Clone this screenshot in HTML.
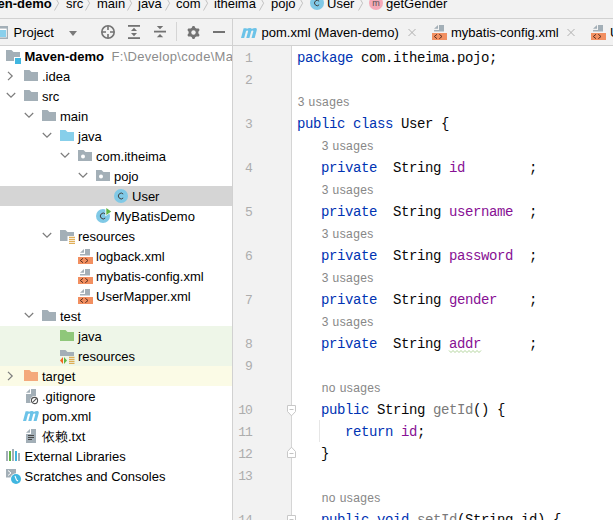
<!DOCTYPE html><html><head><meta charset="utf-8"><style>
*{margin:0;padding:0;box-sizing:border-box}
html,body{width:613px;height:520px;overflow:hidden;background:#fff;font-family:"Liberation Sans",sans-serif;position:relative}
.a{position:absolute}
.tx{position:absolute;white-space:nowrap;font-size:13px;color:#000;line-height:16px}
.mono{position:absolute;font-family:"Liberation Mono",monospace;font-size:14px;letter-spacing:-0.4px;white-space:pre;line-height:16px;color:#080808}
.k{color:#0033b3}.f{color:#871094}.g{color:#7a7a7a}
.hint{position:absolute;font-size:12px;letter-spacing:0.4px;color:#878787;white-space:nowrap;line-height:16px}
svg{position:absolute;overflow:visible}
</style></head><body>
<div class="a" style="left:0px;top:0px;width:613px;height:18px;background:#f2f2f2"></div>
<div class="a" style="left:0px;top:18px;width:613px;height:1px;background:#d1d1d1"></div>
<div class="tx" style="left:-2.5px;top:-4.00px;font-size:13px;color:#000;font-weight:bold;">en-demo</div>
<svg style="left:54px;top:0px" width="6" height="13" viewBox="0 0 6 13"><path d="M0.5 -4 L4.6 3.2 L0.5 10.5" fill="none" stroke="#c2c2c2" stroke-width="1"/></svg>
<div class="tx" style="left:66px;top:-4.00px;font-size:13px;color:#000;font-weight:normal;">src</div>
<svg style="left:85px;top:0px" width="6" height="13" viewBox="0 0 6 13"><path d="M0.5 -4 L4.6 3.2 L0.5 10.5" fill="none" stroke="#c2c2c2" stroke-width="1"/></svg>
<div class="tx" style="left:97px;top:-4.00px;font-size:13px;color:#000;font-weight:normal;">main</div>
<svg style="left:127px;top:0px" width="6" height="13" viewBox="0 0 6 13"><path d="M0.5 -4 L4.6 3.2 L0.5 10.5" fill="none" stroke="#c2c2c2" stroke-width="1"/></svg>
<div class="tx" style="left:138px;top:-4.00px;font-size:13px;color:#000;font-weight:normal;">java</div>
<svg style="left:165px;top:0px" width="6" height="13" viewBox="0 0 6 13"><path d="M0.5 -4 L4.6 3.2 L0.5 10.5" fill="none" stroke="#c2c2c2" stroke-width="1"/></svg>
<div class="tx" style="left:176px;top:-4.00px;font-size:13px;color:#000;font-weight:normal;">com</div>
<svg style="left:203px;top:0px" width="6" height="13" viewBox="0 0 6 13"><path d="M0.5 -4 L4.6 3.2 L0.5 10.5" fill="none" stroke="#c2c2c2" stroke-width="1"/></svg>
<div class="tx" style="left:214px;top:-4.00px;font-size:13px;color:#000;font-weight:normal;">itheima</div>
<svg style="left:259px;top:0px" width="6" height="13" viewBox="0 0 6 13"><path d="M0.5 -4 L4.6 3.2 L0.5 10.5" fill="none" stroke="#c2c2c2" stroke-width="1"/></svg>
<div class="tx" style="left:271px;top:-4.00px;font-size:13px;color:#000;font-weight:normal;">pojo</div>
<svg style="left:298px;top:0px" width="6" height="13" viewBox="0 0 6 13"><path d="M0.5 -4 L4.6 3.2 L0.5 10.5" fill="none" stroke="#c2c2c2" stroke-width="1"/></svg>
<svg style="left:310px;top:-4px" width="14" height="14" viewBox="0 0 14 14"><circle cx="7" cy="7" r="7" fill="#80c9e6"/><path d="M9.1 5.2 A2.6 2.7 0 1 0 9.1 8.8" fill="none" stroke="#404040" stroke-width="1"/></svg>
<div class="tx" style="left:327px;top:-4.00px;font-size:13px;color:#000;font-weight:normal;">User</div>
<svg style="left:358px;top:0px" width="6" height="13" viewBox="0 0 6 13"><path d="M0.5 -4 L4.6 3.2 L0.5 10.5" fill="none" stroke="#c2c2c2" stroke-width="1"/></svg>
<svg style="left:369px;top:-4px" width="14" height="14" viewBox="0 0 14 14"><circle cx="7" cy="7" r="7" fill="#f5a9b8"/><text x="7" y="9.5" font-size="9" text-anchor="middle" fill="#505050" font-family="Liberation Sans">m</text></svg>
<div class="tx" style="left:386px;top:-4.00px;font-size:13px;color:#000;font-weight:normal;">getGender</div>
<div class="a" style="left:0px;top:19px;width:232px;height:26px;background:#f2f2f2"></div>
<div class="a" style="left:0px;top:45px;width:613px;height:1px;background:#d1d1d1"></div>
<svg style="left:-6px;top:26px" width="14" height="13" viewBox="0 0 14 13"><rect x="0" y="0" width="14" height="13" fill="#a3afb7"/><rect x="0" y="2.6" width="12.7" height="8.8" fill="#fff"/><rect x="0" y="4" width="12" height="7" fill="#8ad0ec"/></svg>
<div class="tx" style="left:13.5px;top:24.80px;font-size:13px;color:#000;font-weight:normal;">Project</div>
<svg style="left:69px;top:31px" width="8" height="5" viewBox="0 0 8 5"><path d="M0 0 H8 L4 5 Z" fill="#7a7a7a"/></svg>
<svg style="left:101px;top:25px" width="14" height="14" viewBox="0 0 14 14"><circle cx="7" cy="7" r="6.2" fill="none" stroke="#737373" stroke-width="1.6"/><path d="M7 1 V5 M7 9 V13 M1 7 H5 M9 7 H13" stroke="#737373" stroke-width="1.6"/></svg>
<svg style="left:128px;top:25px" width="12" height="14" viewBox="0 0 12 14"><rect x="0" y="0" width="12" height="1.8" fill="#737373"/><rect x="0" y="12.2" width="12" height="1.8" fill="#737373"/><path d="M3 6 L6 2.8 L9 6 Z M3 8 L6 11.2 L9 8 Z" fill="#737373"/></svg>
<svg style="left:154px;top:25px" width="12" height="13" viewBox="0 0 12 13"><rect x="0" y="5.7" width="12" height="1.8" fill="#737373"/><path d="M2.8 1 H9.2 L6 4.2 Z M2.8 12.3 H9.2 L6 9.1 Z" fill="#737373"/></svg>
<div class="a" style="left:176px;top:22px;width:1px;height:19px;background:#d5d5d5"></div>
<svg style="left:186.5px;top:25.5px" width="13" height="13" viewBox="0 0 13 13"><polygon points="5.64,-0.04 7.36,-0.04 8.38,1.97 9.48,2.61 11.74,2.48 12.60,3.97 11.36,5.86 11.36,7.14 12.60,9.03 11.74,10.52 9.48,10.39 8.38,11.03 7.36,13.04 5.64,13.04 4.62,11.03 3.52,10.39 1.26,10.52 0.40,9.03 1.64,7.14 1.64,5.86 0.40,3.97 1.26,2.48 3.52,2.61 4.62,1.97" fill="#737373"/><circle cx="6.5" cy="6.5" r="2.2" fill="#f2f2f2"/></svg>
<div class="a" style="left:213px;top:31px;width:12px;height:2px;background:#737373"></div>
<div class="a" style="left:0px;top:46px;width:232px;height:474px;background:#fff"></div>
<div class="a" style="left:0px;top:186px;width:232px;height:20px;background:#d5d5d5"></div>
<div class="a" style="left:0px;top:326px;width:232px;height:40px;background:#eef6e8"></div>
<div class="a" style="left:0px;top:366px;width:232px;height:20px;background:#fbfbe6"></div>
<svg style="left:6px;top:50px" width="16" height="14" viewBox="0 0 16 14"><path d="M0 0 H5.5 L7.5 2 H14 V11 H0 Z" fill="#a3afb7"/><rect x="8" y="7" width="8" height="7" fill="#fff"/><rect x="9" y="8" width="6" height="6" fill="#40b6e0"/></svg>
<div class="tx" style="left:24.5px;top:48.50px;font-size:13px;color:#000;font-weight:normal;"><b>Maven-demo</b></div>
<svg style="left:7px;top:70.5px" width="7" height="10" viewBox="0 0 7 10"><path d="M1 0.8 L5.2 5 L1 9.2" fill="none" stroke="#7c7c7c" stroke-width="1.2"/></svg>
<svg style="left:24px;top:70px" width="14" height="11" viewBox="0 0 14 11"><path d="M0 0 H5.5 L7.5 2 H14 V11 H0 Z" fill="#a3afb7"/></svg>
<div class="tx" style="left:42px;top:68.50px;font-size:13px;color:#000;font-weight:normal;">.idea</div>
<svg style="left:6px;top:92.2px" width="10" height="7" viewBox="0 0 10 7"><path d="M0.8 1 L5 5.2 L9.2 1" fill="none" stroke="#7c7c7c" stroke-width="1.2"/></svg>
<svg style="left:24px;top:90px" width="14" height="11" viewBox="0 0 14 11"><path d="M0 0 H5.5 L7.5 2 H14 V11 H0 Z" fill="#a3afb7"/></svg>
<div class="tx" style="left:42px;top:88.50px;font-size:13px;color:#000;font-weight:normal;">src</div>
<svg style="left:24px;top:112.2px" width="10" height="7" viewBox="0 0 10 7"><path d="M0.8 1 L5 5.2 L9.2 1" fill="none" stroke="#7c7c7c" stroke-width="1.2"/></svg>
<svg style="left:42px;top:110px" width="14" height="11" viewBox="0 0 14 11"><path d="M0 0 H5.5 L7.5 2 H14 V11 H0 Z" fill="#a3afb7"/></svg>
<div class="tx" style="left:60px;top:108.50px;font-size:13px;color:#000;font-weight:normal;">main</div>
<svg style="left:42px;top:132.2px" width="10" height="7" viewBox="0 0 10 7"><path d="M0.8 1 L5 5.2 L9.2 1" fill="none" stroke="#7c7c7c" stroke-width="1.2"/></svg>
<svg style="left:60px;top:130px" width="14" height="11" viewBox="0 0 14 11"><path d="M0 0 H5.5 L7.5 2 H14 V11 H0 Z" fill="#87cfea"/></svg>
<div class="tx" style="left:78px;top:128.50px;font-size:13px;color:#000;font-weight:normal;">java</div>
<svg style="left:60px;top:152.2px" width="10" height="7" viewBox="0 0 10 7"><path d="M0.8 1 L5 5.2 L9.2 1" fill="none" stroke="#7c7c7c" stroke-width="1.2"/></svg>
<svg style="left:78px;top:150px" width="14" height="11" viewBox="0 0 14 11"><path d="M0 0 H5.5 L7.5 2 H14 V11 H0 Z" fill="#a3afb7"/><circle cx="5" cy="6.5" r="2" fill="#fff"/></svg>
<div class="tx" style="left:96px;top:148.50px;font-size:13px;color:#000;font-weight:normal;">com.itheima</div>
<svg style="left:78px;top:172.2px" width="10" height="7" viewBox="0 0 10 7"><path d="M0.8 1 L5 5.2 L9.2 1" fill="none" stroke="#7c7c7c" stroke-width="1.2"/></svg>
<svg style="left:96px;top:170px" width="14" height="11" viewBox="0 0 14 11"><path d="M0 0 H5.5 L7.5 2 H14 V11 H0 Z" fill="#a3afb7"/><circle cx="5" cy="6.5" r="2" fill="#fff"/></svg>
<div class="tx" style="left:114px;top:168.50px;font-size:13px;color:#000;font-weight:normal;">pojo</div>
<svg style="left:114px;top:189px" width="14" height="14" viewBox="0 0 14 14"><circle cx="7" cy="7" r="7" fill="#80c9e6"/><path d="M9.2 5.0 A2.8 2.9 0 1 0 9.2 9.0" fill="none" stroke="#404040" stroke-width="1"/></svg>
<div class="tx" style="left:132px;top:188.50px;font-size:13px;color:#000;font-weight:normal;">User</div>
<svg style="left:96px;top:209px" width="15" height="14" viewBox="0 0 15 14"><circle cx="7" cy="7" r="7" fill="#80c9e6"/><path d="M9.2 5.0 A2.8 2.9 0 1 0 9.2 9.0" fill="none" stroke="#404040" stroke-width="1"/><path d="M9.4 -2.4 L16.4 2.4 L9.4 7.2 Z" fill="#fff"/><path d="M10.3 -1.1 L15.2 2.4 L10.3 5.9 Z" fill="#5fb544"/></svg>
<div class="tx" style="left:114px;top:208.50px;font-size:13px;color:#000;font-weight:normal;">MyBatisDemo</div>
<svg style="left:42px;top:232.2px" width="10" height="7" viewBox="0 0 10 7"><path d="M0.8 1 L5 5.2 L9.2 1" fill="none" stroke="#7c7c7c" stroke-width="1.2"/></svg>
<svg style="left:60px;top:230px" width="15" height="14" viewBox="0 0 15 14"><path d="M0 0 H5.5 L7.5 2 H14 V11 H0 Z" fill="#a3afb7"/><rect x="7.5" y="6" width="7.5" height="8" fill="#fff"/><path d="M9 7.3 H15 M9 9.3 H15 M9 11.3 H15 M9 13.3 H15" stroke="#d99c30" stroke-width="1"/></svg>
<div class="tx" style="left:78px;top:228.50px;font-size:13px;color:#000;font-weight:normal;">resources</div>
<svg style="left:78px;top:249px" width="15" height="15" viewBox="0 0 15 15"><path d="M7 0 H12 V6.6 H2 V5 H7 Z" fill="#a3afb7"/><path d="M2 3.7 L6 0 V3.7 Z" fill="#a3afb7"/><rect x="0" y="8" width="15" height="7" fill="#f28f60"/><path d="M5 9.3 L2.3 11.5 L5 13.7 M7.3 9.3 L10 11.5 L7.3 13.7" fill="none" stroke="#5a3020" stroke-width="1"/></svg>
<div class="tx" style="left:96px;top:248.50px;font-size:13px;color:#000;font-weight:normal;">logback.xml</div>
<svg style="left:78px;top:269px" width="15" height="15" viewBox="0 0 15 15"><path d="M7 0 H12 V6.6 H2 V5 H7 Z" fill="#a3afb7"/><path d="M2 3.7 L6 0 V3.7 Z" fill="#a3afb7"/><rect x="0" y="8" width="15" height="7" fill="#f28f60"/><path d="M5 9.3 L2.3 11.5 L5 13.7 M7.3 9.3 L10 11.5 L7.3 13.7" fill="none" stroke="#5a3020" stroke-width="1"/></svg>
<div class="tx" style="left:96px;top:268.50px;font-size:13px;color:#000;font-weight:normal;">mybatis-config.xml</div>
<svg style="left:78px;top:289px" width="15" height="15" viewBox="0 0 15 15"><path d="M7 0 H12 V6.6 H2 V5 H7 Z" fill="#a3afb7"/><path d="M2 3.7 L6 0 V3.7 Z" fill="#a3afb7"/><rect x="0" y="8" width="15" height="7" fill="#f28f60"/><path d="M5 9.3 L2.3 11.5 L5 13.7 M7.3 9.3 L10 11.5 L7.3 13.7" fill="none" stroke="#5a3020" stroke-width="1"/></svg>
<div class="tx" style="left:96px;top:288.50px;font-size:13px;color:#000;font-weight:normal;">UserMapper.xml</div>
<svg style="left:24px;top:312.2px" width="10" height="7" viewBox="0 0 10 7"><path d="M0.8 1 L5 5.2 L9.2 1" fill="none" stroke="#7c7c7c" stroke-width="1.2"/></svg>
<svg style="left:42px;top:310px" width="14" height="11" viewBox="0 0 14 11"><path d="M0 0 H5.5 L7.5 2 H14 V11 H0 Z" fill="#a3afb7"/></svg>
<div class="tx" style="left:60px;top:308.50px;font-size:13px;color:#000;font-weight:normal;">test</div>
<svg style="left:60px;top:330px" width="14" height="11" viewBox="0 0 14 11"><path d="M0 0 H5.5 L7.5 2 H14 V11 H0 Z" fill="#8fc77a"/></svg>
<div class="tx" style="left:78px;top:328.50px;font-size:13px;color:#000;font-weight:normal;">java</div>
<svg style="left:60px;top:350px" width="15" height="14" viewBox="0 0 15 14"><path d="M0 0 H5.5 L7.5 2 H14 V11 H0 Z" fill="#a3afb7"/><rect x="0" y="6" width="15" height="8" fill="#eef6e8"/><path d="M3 7 L0 10.5 L3 14 Z" fill="#f26522"/><path d="M4 7 L7 10.5 L4 14 Z" fill="#5fb544"/><path d="M9 7.3 H14.5 M9 9.3 H14.5 M9 11.3 H14.5 M9 13.3 H14.5" stroke="#d99c30" stroke-width="1"/></svg>
<div class="tx" style="left:78px;top:348.50px;font-size:13px;color:#000;font-weight:normal;">resources</div>
<svg style="left:7px;top:370.5px" width="7" height="10" viewBox="0 0 7 10"><path d="M1 0.8 L5.2 5 L1 9.2" fill="none" stroke="#7c7c7c" stroke-width="1.2"/></svg>
<svg style="left:24px;top:370px" width="14" height="11" viewBox="0 0 14 11"><path d="M0 0 H5.5 L7.5 2 H14 V11 H0 Z" fill="#f4a97c"/></svg>
<div class="tx" style="left:42px;top:368.50px;font-size:13px;color:#000;font-weight:normal;">target</div>
<svg style="left:26px;top:389px" width="13" height="14" viewBox="0 0 13 14"><path d="M5 0 H10 V14 H0 V5 H5 Z" fill="#a3afb7"/><path d="M0 3.7 L4 0 V3.7 Z" fill="#a3afb7"/><circle cx="8.5" cy="11.5" r="4.4" fill="#fff"/><circle cx="8.5" cy="11.5" r="3.1" fill="none" stroke="#505050" stroke-width="1.1"/><path d="M6.4 13.6 L10.6 9.4" stroke="#505050" stroke-width="1.1"/></svg>
<div class="tx" style="left:42px;top:388.50px;font-size:13px;color:#000;font-weight:normal;">.gitignore</div>
<svg style="left:23px;top:411px" width="16" height="11" viewBox="0 0 16 11"><path transform="translate(2.7,0) skewX(-15) scale(1.05,1)" d="M0 10 V0.3 H3 V1 Q4.2 0 6 0 Q7.5 0 8 1 Q9.2 0 11 0 Q13 0 13 2.5 V10 H10 V3.2 Q10 2.5 9.3 2.5 Q8 2.5 8 3.2 V10 H5 V3.2 Q5 2.5 4.3 2.5 Q3 2.5 3 3.5 V10 Z" fill="#6cc3e8"/></svg>
<div class="tx" style="left:42px;top:408.50px;font-size:13px;color:#000;font-weight:normal;">pom.xml</div>
<svg style="left:26px;top:429px" width="13" height="14" viewBox="0 0 13 14"><path d="M5 0 H10 V14 H0 V5 H5 Z" fill="#a3afb7"/><path d="M0 3.7 L4 0 V3.7 Z" fill="#a3afb7"/><path d="M2 6.5 H8 M2 8.5 H8 M2 10.5 H6" stroke="#4a4a4a" stroke-width="1"/></svg>
<div class="tx" style="left:42px;top:428.50px;font-size:13px;color:#000;font-weight:normal;">依赖.txt</div>
<svg style="left:6px;top:449px" width="15" height="13" viewBox="0 0 15 13"><rect x="0" y="2" width="2" height="10" fill="#a3afb7"/><rect x="3" y="2" width="2" height="10" fill="#5fb544"/><rect x="6" y="0" width="2" height="12" fill="#a3afb7"/><rect x="9" y="2" width="2" height="10" fill="#40b6e0"/><rect x="12" y="4" width="2" height="8" fill="#a3afb7"/></svg>
<div class="tx" style="left:24.5px;top:448.50px;font-size:13px;color:#000;font-weight:normal;">External Libraries</div>
<svg style="left:6px;top:469px" width="16" height="15" viewBox="0 0 16 15"><rect x="0" y="0" width="10" height="8.5" fill="#a3afb7"/><path d="M2 1.5 L5 4 L2 6.5" fill="none" stroke="#fff" stroke-width="1"/><circle cx="10" cy="10" r="5.8" fill="#fff"/><circle cx="10" cy="10" r="5" fill="#40b6e0"/><path d="M9 7 L10.5 11 L12 12" fill="none" stroke="#fff" stroke-width="1.1"/></svg>
<div class="tx" style="left:24.5px;top:468.50px;font-size:13px;color:#000;font-weight:normal;">Scratches and Consoles</div>
<div class="tx" style="left:111.5px;top:48.50px;font-size:13px;color:#8c8c8c;font-weight:normal;letter-spacing:0.3px;width:120.5px;overflow:hidden">F:\Develop\code\Maven-demo</div>
<div class="a" style="left:232px;top:19px;width:1px;height:501px;background:#d1d1d1"></div>
<div class="a" style="left:233px;top:19px;width:380px;height:26px;background:#f2f2f2"></div>
<svg style="left:241px;top:27.5px" width="17" height="11" viewBox="0 0 17 11"><path transform="translate(2.7,0) skewX(-15) scale(1.05,1)" d="M0 10 V0.3 H3 V1 Q4.2 0 6 0 Q7.5 0 8 1 Q9.2 0 11 0 Q13 0 13 2.5 V10 H10 V3.2 Q10 2.5 9.3 2.5 Q8 2.5 8 3.2 V10 H5 V3.2 Q5 2.5 4.3 2.5 Q3 2.5 3 3.5 V10 Z" fill="#6cc3e8"/></svg>
<div class="tx" style="left:261.5px;top:24.80px;font-size:13px;color:#000;font-weight:normal;">pom.xml (Maven-demo)</div>
<svg style="left:408px;top:29px" width="8" height="7" viewBox="0 0 8 7"><path d="M0.5 0 L7.5 7 M7.5 0 L0.5 7" stroke="#b0b0b0" stroke-width="1"/></svg>
<svg style="left:432px;top:24.5px" width="15" height="15" viewBox="0 0 15 15"><path d="M7 0 H12 V6.6 H2 V5 H7 Z" fill="#a3afb7"/><path d="M2 3.7 L6 0 V3.7 Z" fill="#a3afb7"/><rect x="0" y="8" width="15" height="7" fill="#f28f60"/><path d="M5 9.3 L2.3 11.5 L5 13.7 M7.3 9.3 L10 11.5 L7.3 13.7" fill="none" stroke="#5a3020" stroke-width="1"/></svg>
<div class="tx" style="left:451px;top:24.80px;font-size:13px;color:#000;font-weight:normal;">mybatis-config.xml</div>
<svg style="left:567px;top:29px" width="8" height="7" viewBox="0 0 8 7"><path d="M0.5 0 L7.5 7 M7.5 0 L0.5 7" stroke="#b0b0b0" stroke-width="1"/></svg>
<svg style="left:591px;top:24.5px" width="15" height="15" viewBox="0 0 15 15"><path d="M7 0 H12 V6.6 H2 V5 H7 Z" fill="#a3afb7"/><path d="M2 3.7 L6 0 V3.7 Z" fill="#a3afb7"/><rect x="0" y="8" width="15" height="7" fill="#f28f60"/><path d="M5 9.3 L2.3 11.5 L5 13.7 M7.3 9.3 L10 11.5 L7.3 13.7" fill="none" stroke="#5a3020" stroke-width="1"/></svg>
<div class="tx" style="left:610px;top:24.80px;font-size:13px;color:#000;font-weight:normal;">UserMapper.xml</div>
<div class="a" style="left:233px;top:46px;width:58px;height:474px;background:#f2f2f2"></div>
<div class="a" style="left:291px;top:46px;width:1px;height:474px;background:#d5d5d5"></div>
<div class="mono" style="left:222px;top:51px;width:30px;text-align:right;color:#adadad;font-size:13px;letter-spacing:-0.9px">1</div>
<div class="mono" style="left:297px;top:50px"><span class="k">package</span> com.itheima.pojo;</div>
<div class="mono" style="left:222px;top:73px;width:30px;text-align:right;color:#adadad;font-size:13px;letter-spacing:-0.9px">2</div>
<div class="hint" style="left:297.8px;top:94px">3 usages</div>
<div class="mono" style="left:222px;top:117px;width:30px;text-align:right;color:#adadad;font-size:13px;letter-spacing:-0.9px">3</div>
<div class="mono" style="left:297px;top:116px"><span class="k">public</span> <span class="k">class</span> User {</div>
<div class="hint" style="left:321.8px;top:138px">3 usages</div>
<div class="mono" style="left:222px;top:161px;width:30px;text-align:right;color:#adadad;font-size:13px;letter-spacing:-0.9px">4</div>
<div class="mono" style="left:321px;top:160px"><span class="k">private</span>  String <span class="f">id</span>        ;</div>
<div class="hint" style="left:321.8px;top:182px">3 usages</div>
<div class="mono" style="left:222px;top:205px;width:30px;text-align:right;color:#adadad;font-size:13px;letter-spacing:-0.9px">5</div>
<div class="mono" style="left:321px;top:204px"><span class="k">private</span>  String <span class="f">username</span>  ;</div>
<div class="hint" style="left:321.8px;top:226px">3 usages</div>
<div class="mono" style="left:222px;top:249px;width:30px;text-align:right;color:#adadad;font-size:13px;letter-spacing:-0.9px">6</div>
<div class="mono" style="left:321px;top:248px"><span class="k">private</span>  String <span class="f">password</span>  ;</div>
<div class="hint" style="left:321.8px;top:270px">3 usages</div>
<div class="mono" style="left:222px;top:293px;width:30px;text-align:right;color:#adadad;font-size:13px;letter-spacing:-0.9px">7</div>
<div class="mono" style="left:321px;top:292px"><span class="k">private</span>  String <span class="f">gender</span>    ;</div>
<div class="hint" style="left:321.8px;top:314px">3 usages</div>
<div class="mono" style="left:222px;top:337px;width:30px;text-align:right;color:#adadad;font-size:13px;letter-spacing:-0.9px">8</div>
<div class="mono" style="left:321px;top:336px"><span class="k">private</span>  String <span class="f">addr</span>      ;</div>
<div class="mono" style="left:222px;top:359px;width:30px;text-align:right;color:#adadad;font-size:13px;letter-spacing:-0.9px">9</div>
<div class="hint" style="left:321.8px;top:380px">no usages</div>
<div class="mono" style="left:222px;top:403px;width:30px;text-align:right;color:#adadad;font-size:13px;letter-spacing:-0.9px">10</div>
<div class="mono" style="left:321px;top:402px"><span class="k">public</span> String <span class="g">getId</span>() {</div>
<div class="mono" style="left:222px;top:425px;width:30px;text-align:right;color:#adadad;font-size:13px;letter-spacing:-0.9px">11</div>
<div class="mono" style="left:345px;top:424px"><span class="k">return</span> <span class="f">id</span>;</div>
<div class="mono" style="left:222px;top:447px;width:30px;text-align:right;color:#adadad;font-size:13px;letter-spacing:-0.9px">12</div>
<div class="mono" style="left:321px;top:446px">}</div>
<div class="mono" style="left:222px;top:469px;width:30px;text-align:right;color:#adadad;font-size:13px;letter-spacing:-0.9px">13</div>
<div class="hint" style="left:321.8px;top:490px">no usages</div>
<div class="mono" style="left:222px;top:513px;width:30px;text-align:right;color:#adadad;font-size:13px;letter-spacing:-0.9px">14</div>
<div class="mono" style="left:321px;top:512px"><span class="k">public</span> <span class="k">void</span> <span class="g">setId</span>(String id) {</div>
<svg style="left:287px;top:405px" width="9" height="12" viewBox="0 0 9 12"><path d="M0.5 0.5 H8.5 V6.5 L4.5 10.8 L0.5 6.5 Z" fill="#fff" stroke="#c8c8c8" stroke-width="1"/><path d="M2.5 4.5 H6.5" stroke="#c4c4c4" stroke-width="1"/></svg>
<svg style="left:287px;top:446px" width="9" height="12" viewBox="0 0 9 12"><path d="M0.5 11.5 H8.5 V5.5 L4.5 1.2 L0.5 5.5 Z" fill="#fff" stroke="#c8c8c8" stroke-width="1"/><path d="M2.5 7.5 H6.5" stroke="#c4c4c4" stroke-width="1"/></svg>
<svg style="left:287px;top:515px" width="9" height="12" viewBox="0 0 9 12"><path d="M0.5 0.5 H8.5 V6.5 L4.5 10.8 L0.5 6.5 Z" fill="#fff" stroke="#c8c8c8" stroke-width="1"/><path d="M2.5 4.5 H6.5" stroke="#c4c4c4" stroke-width="1"/></svg>
<div class="a" style="left:319px;top:420px;width:1px;height:22px;background:#e6e6e6"></div>
<svg style="left:449px;top:350px" width="32" height="3" viewBox="0 0 32 3"><polyline points="0,0.5 2,2.5 4,0.5 6,2.5 8,0.5 10,2.5 12,0.5 14,2.5 16,0.5 18,2.5 20,0.5 22,2.5 24,0.5 26,2.5 28,0.5 30,2.5 32,0.5" fill="none" stroke="#a9cf92" stroke-width="0.9"/></svg>
</body></html>
